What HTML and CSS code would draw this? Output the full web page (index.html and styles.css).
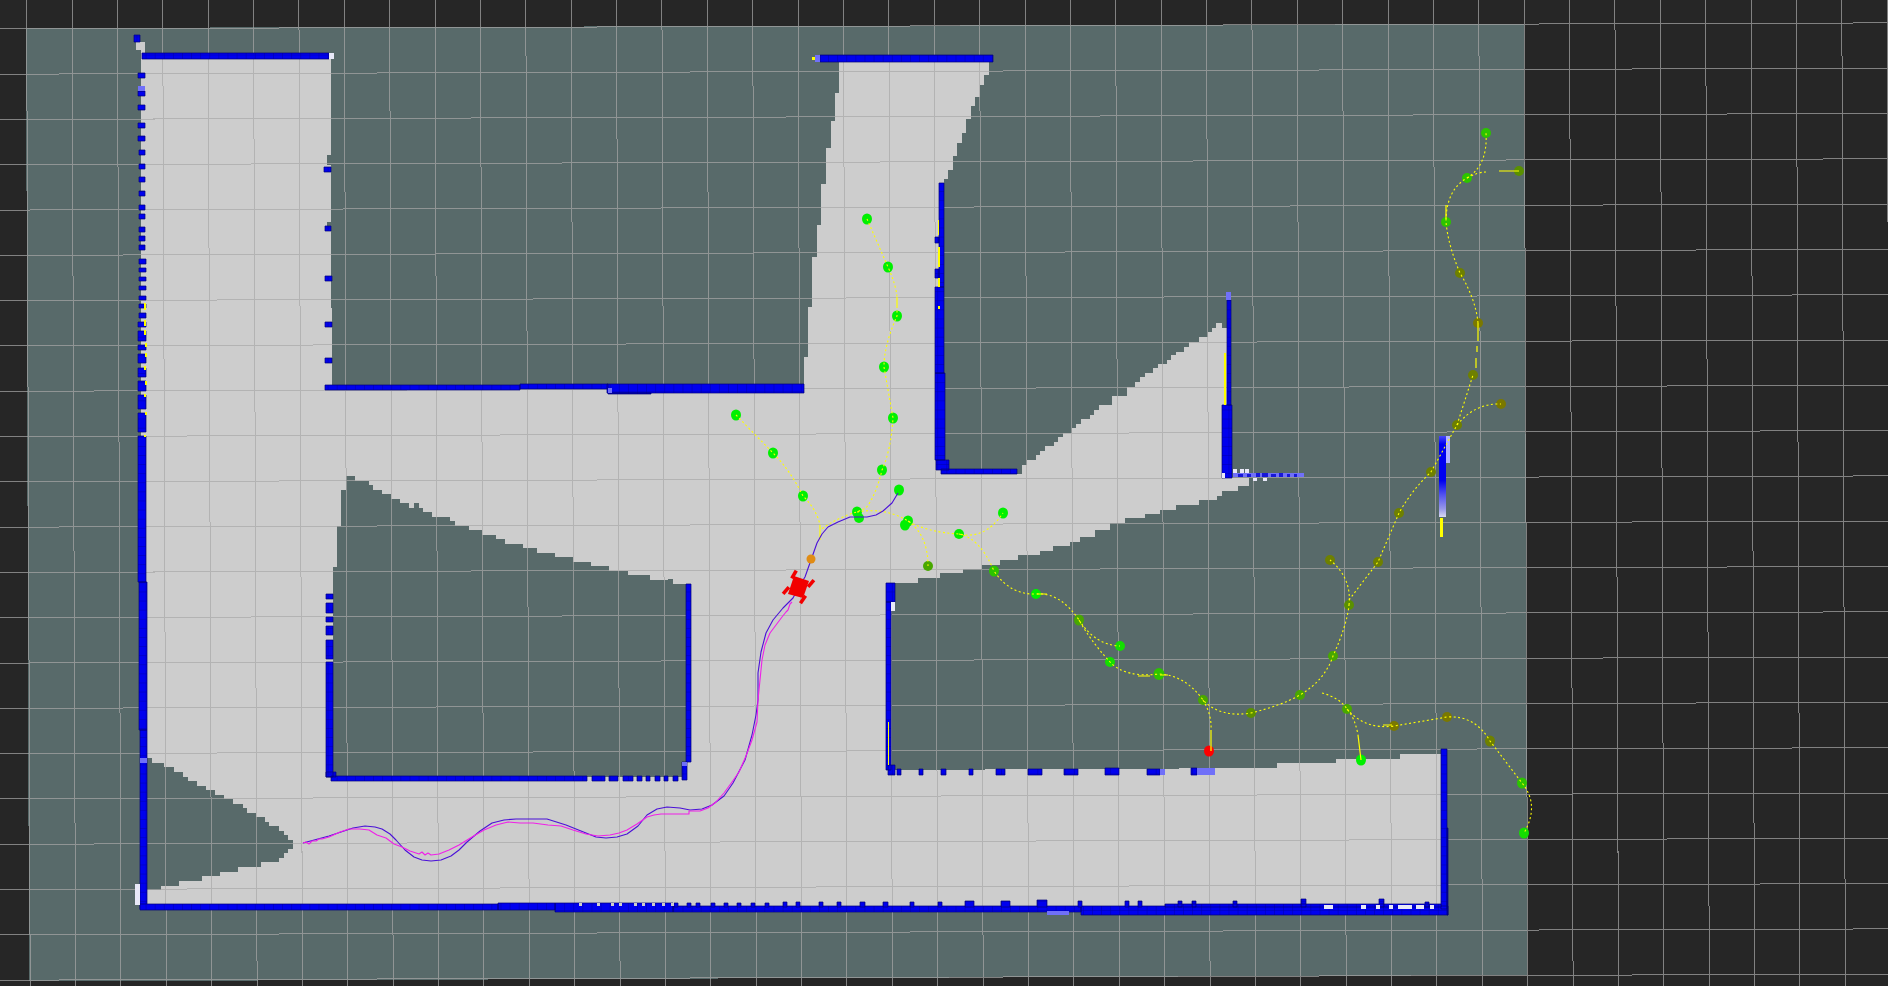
FILE: index.html
```html
<!DOCTYPE html>
<html lang="en">
<head>
<meta charset="utf-8">
<title>Map view</title>
<link rel="stylesheet" href="styles.css">
</head>
<body>
<main class="viewport">
<svg class="scene" width="1888" height="986" viewBox="0 0 1888 986" xmlns="http://www.w3.org/2000/svg">
  <defs>
    <pattern id="cells" width="9.1" height="9.1" patternUnits="userSpaceOnUse">
      <rect width="9.1" height="9.1" fill="#0000ee"/>
      <path d="M0 0H9.1M0 0V9.1" stroke="#0000a8" stroke-width="1"/>
    </pattern>
    <linearGradient id="fade" x1="0" y1="0" x2="0" y2="1">
      <stop offset="0" stop-color="#4848f8"/>
      <stop offset=".1" stop-color="#0000f0"/>
      <stop offset=".55" stop-color="#0000f0"/>
      <stop offset=".72" stop-color="#5050f0"/>
      <stop offset=".9" stop-color="#9898e8"/>
      <stop offset="1" stop-color="#d8d8f0"/>
    </linearGradient>
  </defs>

  <polygon class="map" points="26,28 1524,24 1527.5,975 29,981.5"/>

  <polygon class="free" points="136,42 145,42 145,55 331,55 331,155 327,155 327,165 331,165 331,222 327,222 327,228 331,228 332,385 804,385 804,357 808,357 808,307 812,307 812,257 817,257 817,225 821,225 821,184 826,184 826,148 831,148 831,121 835,121 835,93 839,93 839,61 989,61 989,75 984,75 984,85 980,85 980,97 975,97 975,106 971,106 971,119 966,119 966,133 962,133 962,143 957,143 957,156 953,156 953,170 948,170 948,179 944,179 944,474 1177,474 1176,510 1160,510 1160,514 1145,514 1145,518 1125,518 1125,523 1110,523 1110,530 1095,530 1095,537 1080,537 1080,542 1070,542 1070,546 1053,546 1053,551 1040,551 1040,555 1018,555 1018,560 1000,560 1000,565 982,565 982,569 963,569 963,573 940,573 940,578 918,578 918,583 889,583 889,770 1277,768 1277,763 1336,763 1336,759 1400,759 1400,754 1441,754 1441,906 141,906 141,50 136,50"/>

  <polygon class="free" transform="translate(700 30) scale(.40816 .33333)" points="788,1335 788,1305 800,1305 800,1290 822,1290 822,1275 833,1275 833,1262 845,1262 845,1248 867,1248 867,1235 878,1235 878,1222 889,1222 889,1208 911,1208 911,1195 922,1195 922,1182 933,1182 933,1168 955,1168 955,1155 966,1155 966,1140 977,1140 977,1125 1010,1125 1010,1098 1033,1098 1045,1098 1045,1070 1065,1070 1065,1055 1078,1055 1078,1042 1090,1042 1090,1030 1110,1030 1110,1015 1122,1015 1122,1002 1145,1002 1145,990 1155,990 1155,975 1167,975 1167,965 1187,965 1187,950 1198,950 1198,935 1222,935 1222,922 1245,922 1245,905 1255,905 1255,893 1265,893 1265,880 1278,880 1278,893 1290,893 1290,1345 1345,1345 1345,1368 1318,1368 1318,1383 1280,1383 1280,1397 1267,1397 1267,1410 1222,1410 1222,1425 1165,1425 1165,1440 1160,1440 1160,1335"/>

  <polygon class="map" transform="translate(320 460) scale(.33333)" points="38,950 38,322 52,322 52,198 63,198 63,90 77,90 77,48 105,48 105,62 147,62 147,76 160,76 160,90 187,90 187,103 214,103 214,117 241,117 241,130 268,130 268,144 282,144 282,130 296,130 296,144 309,144 309,157 336,157 336,171 390,171 390,184 404,184 404,198 447,198 447,211 487,211 487,225 528,225 528,238 555,238 555,252 610,252 610,265 651,265 651,279 705,279 705,292 760,292 760,306 813,306 813,319 867,319 867,332 924,332 924,346 990,346 990,359 1045,359 1045,356 1059,356 1059,372 1100,372 1100,950"/>

  <polygon class="map" transform="translate(100 730) scale(.40816 .33333)" points="115,85 128,85 128,98 158,98 158,112 182,112 182,125 204,125 204,140 216,140 216,153 238,153 238,167 260,167 260,180 282,180 282,194 304,194 304,208 327,208 327,222 350,222 350,235 361,235 361,248 382,248 382,262 404,262 404,275 415,275 415,288 438,288 438,302 450,302 450,315 461,315 461,330 472,330 472,357 461,357 461,370 450,370 450,383 438,383 438,395 394,395 394,410 338,410 338,425 294,425 294,438 250,438 250,452 193,452 193,467 150,467 150,480 115,480"/>

  <path class="grid" d="M26.6 0l3.6 986M72 0l3.6 986M117.4 0l3.6 986M162.7 0l3.6 986M208.1 0l3.6 986M253.5 0l3.6 986M298.9 0l3.6 986M344.3 0l3.6 986M389.6 0l3.6 986M435 0l3.6 986M480.4 0l3.6 986M525.8 0l3.6 986M571.2 0l3.6 986M616.5 0l3.6 986M661.9 0l3.6 986M707.3 0l3.6 986M752.7 0l3.6 986M798.1 0l3.6 986M843.4 0l3.6 986M888.8 0l3.6 986M934.2 0l3.6 986M979.6 0l3.6 986M1025 0l3.6 986M1070.3 0l3.6 986M1115.7 0l3.6 986M1161.1 0l3.6 986M1206.5 0l3.6 986M1251.9 0l3.6 986M1297.2 0l3.6 986M1342.6 0l3.6 986M1388 0l3.6 986M1433.4 0l3.6 986M1478.8 0l3.6 986M1524.1 0l3.6 986M1569.5 0l3.6 986M1614.9 0l3.6 986M1660.3 0l3.6 986M1705.7 0l3.6 986M1751 0l3.6 986M1796.4 0l3.6 986M1841.8 0l3.6 986M1887.2 0l3.6 986M0 28.9l1888 -6M0 74.2l1888 -6M0 119.5l1888 -6M0 164.8l1888 -6M0 210.1l1888 -6M0 255.4l1888 -6M0 300.7l1888 -6M0 346l1888 -6M0 391.3l1888 -6M0 436.6l1888 -6M0 481.9l1888 -6M0 527.2l1888 -6M0 572.5l1888 -6M0 617.8l1888 -6M0 663.1l1888 -6M0 708.4l1888 -6M0 753.7l1888 -6M0 799l1888 -6M0 844.3l1888 -6M0 889.6l1888 -6M0 934.9l1888 -6M0 980.2l1888 -6"/>

  <g fill="url(#cells)" class="walls">
    <path d="M134 35h6v7h-6zM142 53h187v6h-187z"/>
    <path d="M138 73h7v5h-7zM138 91h7v5h-7zM138 105h7v5h-7zM138 123h7v5h-7zM138 136h7v5h-7zM139 150h6v5h-6zM139 164h6v5h-6zM139 177h6v5h-6zM139 191h6v5h-6zM139 205h6v5h-6zM139 214h6v5h-6zM139 227h6v5h-6zM139 236h6v5h-6zM139 245h6v5h-6zM139 259h7v5h-7zM139 268h7v4h-7zM139 277h7v4h-7zM139 286h7v4h-7zM139 296h7v4h-7zM139 304h7v4h-7zM139 313h7v5h-7zM138 322h8v5h-8zM138 331h8v10h-8zM138 345h8v5h-8zM138 354h8v9h-8zM138 368h8v9h-8zM138 381h8v10h-8zM138 395h8v14h-8zM138 413h8v19h-8z"/>
    <path d="M138 436h8v146h-8zM139 582h8v148h-8zM140 730h7v179h-7z"/>
    <path d="M324 167h7v5h-7zM325 226h6v5h-6zM325 276h7v5h-7zM325 322h7v5h-7zM325 358h7v5h-7z"/>
    <path d="M325 385h195v5h-195zM520 384h88v5h-88zM607 384h197v9h-197zM608 393h43v1h-43z"/>
    <path d="M326 594h7v5h-7zM326 603h7v10h-7zM326 617h7v5h-7zM326 626h7v9h-7zM326 640h7v19h-7zM326 662h7v115h-7zM326 772h10v5h-10zM331 776h256v5h-256zM592 776h13v5h-13zM609 776h9v5h-9zM623 776h10v5h-10zM637 776h5v5h-5zM646 776h4v5h-4zM655 776h5v5h-5zM664 776h4v5h-4zM673 776h5v5h-5zM682 762h5v18h-5zM686 584h5v178h-5z"/>
    <path d="M140 904h358v6h-358zM498 903h57v7h-57zM555 903h118v9h-118zM673 906h408v6h-408zM1081 906h367v9h-367zM1441 749h6v160h-6zM1447 828h1v87h-1z"/>
    <path d="M674 903h4v4h-4zM687 903h4v4h-4zM696 903h4v4h-4zM711 903h4v4h-4zM724 903h4v4h-4zM737 903h4v4h-4zM751 903h4v4h-4zM765 903h4v4h-4zM783 902h4v5h-4zM796 902h4v5h-4zM819 902h4v5h-4zM837 902h4v5h-4zM860 902h5v5h-5zM883 902h5v5h-5zM910 902h4v5h-4zM938 902h4v5h-4zM965 901h9v6h-9zM1001 901h9v6h-9zM1037 900h10v7h-10zM1078 901h4v6h-4zM1125 901h4v6h-4zM1138 901h4v6h-4zM1178 901h4v6h-4zM1192 901h4v6h-4zM1233 901h4v6h-4zM1301 899h5v8h-5zM1379 899h5v8h-5zM1425 902h4v5h-4zM1165 904h276v3h-276z"/>
    <path d="M820 55h173v7h-173z"/>
    <path d="M939 183h5v104h-5zM935 237h4v6h-4zM935 269h4v9h-4zM935 287h9v86h-9zM935 373h10v87h-10zM936 460h13v10h-13zM941 469h76v5h-76z"/>
    <path d="M1227 300h4v105h-4zM1222 405h10v73h-10z"/>
    <path d="M886 583h9v19h-9zM886 602h5v168h-5zM888 765h7v10h-7z"/>
    <path d="M897 769h4v6h-4zM919 769h4v6h-4zM941 769h5v6h-5zM969 769h4v6h-4zM996 769h9v6h-9zM1028 769h14v6h-14zM1064 769h14v6h-14zM1105 768h14v7h-14zM1147 769h13v6h-13zM1191 768h6v7h-6z"/>
  </g>
  <path class="notch" d="M579 903h3v3h-3zM597 903h3v3h-3zM611 903h3v3h-3zM619 903h3v3h-3zM634 903h3v3h-3zM642 903h3v3h-3zM652 903h3v3h-3zM662 903h3v3h-3zM671 903h3v3h-3z"/>
  <path class="lav" d="M138 86h7v5h-7zM608 388h4v5h-4zM815 55h5v7h-5zM1226 292h5v8h-5zM1233 473h71v4h-71zM682 762h5v4h-5zM140 758h7v5h-7zM1160 769h5v6h-5zM1197 768h18v7h-18zM1047 911h22v4h-22z"/>
  <path class="deep" d="M1238 474h5v3h-5zM1247 474h4v3h-4zM1256 473h4v4h-4zM1262 473h6v4h-6zM1271 474h5v3h-5zM1279 473h4v4h-4zM1287 474h3v3h-3zM1294 474h3v3h-3z"/>
  <path class="pale" d="M329 53h5v6h-5zM135 884h5v21h-5zM891 602h4v9h-4zM1233 469h4v4h-4zM1240 469h4v4h-4zM1245 469h4v4h-4zM1253 478h4v3h-4zM1263 478h4v3h-4zM1222 473h3v5h-3zM1324 905h9v4h-9zM1361 905h5v4h-5zM1376 905h4v4h-4zM1389 905h4v4h-4zM1398 905h14v4h-14zM1416 905h8v4h-8zM1430 905h4v4h-4z"/>
  <path class="yellow" d="M144 303h2v7h-2zM144 320h2v6h-2zM144 330h2v5h-2zM145 343h2v4h-2zM145 353h2v4h-2zM144 366h2v4h-2zM145 381h2v4h-2zM144 394h2v3h-2zM145 412h2v3h-2zM144 435h2v2h-2zM812 57h3v3h-3zM938 220h1v15h-1zM938 247h2v20h-2zM938 278h2v9h-2zM938 306h2v3h-2zM1224 353h2v52h-2zM888 722h1v43h-1zM1440 518h3v19h-3z"/>
  <rect class="stack-top" x="1446" y="436" width="4" height="27"/>
  <rect x="1439" y="436" width="7" height="81" fill="url(#fade)"/>

  <g class="nodes">
    <ellipse class="n0" cx="736" cy="415" rx="5" ry="5.5"/>
    <ellipse class="n0" cx="773" cy="453" rx="5" ry="5.5"/>
    <ellipse class="n0" cx="803" cy="496" rx="5" ry="5.5"/>
    <ellipse class="n0" cx="867" cy="219" rx="5" ry="5.5"/>
    <ellipse class="n0" cx="888" cy="267" rx="5" ry="5.5"/>
    <ellipse class="n0" cx="897" cy="316" rx="5" ry="5.5"/>
    <ellipse class="n0" cx="884" cy="367" rx="5" ry="5.5"/>
    <ellipse class="n0" cx="893" cy="418" rx="5" ry="5.5"/>
    <ellipse class="n0" cx="882" cy="470" rx="5" ry="5.5"/>
    <ellipse class="n0" cx="899" cy="490" rx="5" ry="5.5"/>
    <ellipse class="n0" cx="859" cy="518" rx="5" ry="5"/>
    <ellipse class="n0" cx="857" cy="512" rx="5" ry="5.5"/>
    <ellipse class="n0" cx="908" cy="521" rx="5" ry="5.5"/>
    <ellipse class="n0" cx="905" cy="525" rx="5" ry="5.5"/>
    <ellipse class="n0" cx="959" cy="534" rx="5" ry="5"/>
    <ellipse class="n0" cx="1003" cy="513" rx="5" ry="5.5"/>
    <ellipse class="n3" cx="928" cy="566" rx="5" ry="5"/>
    <ellipse class="n2" cx="994" cy="571" rx="5" ry="5.5"/>
    <ellipse class="n0" cx="1036" cy="594" rx="5" ry="5"/>
    <ellipse class="n3" cx="1079" cy="620" rx="5" ry="5.5"/>
    <ellipse class="n1" cx="1120" cy="646" rx="5" ry="5"/>
    <ellipse class="n1" cx="1110" cy="662" rx="5" ry="5"/>
    <ellipse class="n2" cx="1159" cy="674" rx="5.5" ry="6"/>
    <ellipse class="n3" cx="1203" cy="700" rx="5" ry="5"/>
    <ellipse class="n4" cx="1251" cy="713" rx="5" ry="5"/>
    <ellipse class="n3" cx="1300" cy="695" rx="5" ry="5"/>
    <ellipse class="n3" cx="1333" cy="656" rx="5" ry="5"/>
    <ellipse class="n4" cx="1349" cy="605" rx="5" ry="5"/>
    <ellipse class="n5" cx="1378" cy="562" rx="5" ry="5"/>
    <ellipse class="n5" cx="1330" cy="560" rx="5" ry="5"/>
    <ellipse class="n3" cx="1347" cy="709" rx="5" ry="5"/>
    <ellipse class="n0" cx="1361" cy="760" rx="5" ry="5.5"/>
    <ellipse class="n6" cx="1394" cy="726" rx="5" ry="5"/>
    <ellipse class="n6" cx="1447" cy="717" rx="5" ry="5"/>
    <ellipse class="n5" cx="1490" cy="741" rx="5" ry="5.5"/>
    <ellipse class="n2" cx="1522" cy="783" rx="5" ry="5.5"/>
    <ellipse class="n1" cx="1524" cy="833" rx="5" ry="5.5"/>
    <ellipse class="n2" cx="1486" cy="133" rx="5" ry="5"/>
    <ellipse class="n4" cx="1519" cy="171" rx="5" ry="5"/>
    <ellipse class="n2" cx="1467" cy="178" rx="5" ry="5"/>
    <ellipse class="n2" cx="1446" cy="222" rx="5" ry="5"/>
    <ellipse class="n5" cx="1460" cy="273" rx="5" ry="5"/>
    <ellipse class="n6" cx="1478" cy="323" rx="5" ry="5"/>
    <ellipse class="n5" cx="1473" cy="375" rx="5" ry="5"/>
    <ellipse class="n6" cx="1501" cy="404" rx="5" ry="5"/>
    <ellipse class="n5" cx="1457" cy="425" rx="5" ry="5"/>
    <ellipse class="n5" cx="1431" cy="472" rx="5" ry="5"/>
    <ellipse class="n5" cx="1399" cy="513" rx="5" ry="5"/>
    <ellipse class="goal" cx="1209" cy="751" rx="5" ry="5.5"/>
  </g>

  <g class="traj">
    <path d="M736 415L773 453Q790 470 803 496Q817 510 820 525"/>
    <path d="M867 219L888 267Q896 285 897 297M897 306V316Q884 345 884 367L893 418Q891 450 882 470Q876 495 866 508L857 512Q838 517 820 530"/>
    <path d="M857 512Q885 507 908 521Q926 532 959 534Q985 540 1003 513"/>
    <path d="M908 521Q928 535 928 566"/>
    <path d="M959 534Q980 538 994 571Q1010 595 1036 594Q1060 592 1079 620Q1090 640 1110 662Q1125 678 1159 674Q1185 675 1203 700Q1220 718 1251 713Q1280 706 1300 695Q1325 680 1333 656Q1347 625 1349 605"/>
    <path d="M1079 620Q1095 645 1120 646"/>
    <path d="M1349 605Q1352 578 1330 560"/>
    <path d="M1349 600L1378 562L1399 513Q1412 490 1431 472L1457 425L1473 375"/>
    <path d="M1478 323Q1476 300 1460 273Q1448 245 1446 222Q1446 190 1467 178Q1488 165 1486 133"/>
    <path d="M1467 178Q1478 172 1486 172"/>
    <path d="M1457 425Q1475 403 1501 404"/>
    <path d="M1203 700Q1212 715 1211 730"/>
    <path d="M1322 693Q1340 698 1347 709Q1355 718 1358 735"/>
    <path d="M1347 709Q1365 730 1394 726L1447 717Q1475 715 1490 741L1522 783Q1540 805 1524 833"/>
  </g>
  <g class="ticks">
    <path d="M1478 323V341M1477 346V352M1476 358V368M820 525V540M1499 171H1519M1037 594H1047M1138 676H1150M1160 675H1168M1211 730V751M1358 735L1361 760M897 297V306M1446 205V219M1392 725H1383"/>
  </g>

  <polyline class="planned" points="303,843 329,836 353,828 365,826 375,827 382,829 390,834 396,840 405,850 414,857 422,860 431,861 441,860 451,856 459,850 467,842 480,831 492,823 504,820 516,819 547,819 566,825 586,833 596,837 606,838 617,837 627,834 638,826 647,815 657,809 667,807 680,808 690,810 702,809 712,805 724,796 733,783 745,760 752,735 756,715 758,700 758,673 761,652 766,633 773,620 783,608 793,598 800,585 805,577 817,543 822,534 828,527 838,522 850,517 867,517 876,515 883,511 892,503 898,493"/>
  <polyline class="actual" points="303,843 306,842 309,844 312,841 316,841 319,839 322,839 329,837 340,832 349,829 360,829 369,830 377,835 386,838 394,844 402,847 410,851 416,853 419,854 422,852 425,855 428,853 431,855 439,854 449,850 459,845 472,837 484,830 496,825 508,822 520,823 533,823 548,825 561,826 573,830 586,834 598,836 610,835 619,833 627,830 637,824 647,817 654,815 661,814 675,814 689,814 689,811 700,811 708,808 716,802 724,793 732,782 739,772 746,756 752,740 757,722 758,700 760,680 762,660 765,645 770,633 776,625 782,617 786,612 788,610 790,604 792,602"/>

  <circle class="carrot" cx="811" cy="559" r="4.5"/>
  <g class="robot">
    <polygon points="794,576 809,581 803,598 788,594"/>
    <rect x="792.2" y="570" width="3.6" height="9" transform="rotate(30 794 574.5)"/>
    <rect x="809.2" y="579" width="3.6" height="9" transform="rotate(40 811 583.5)"/>
    <rect x="801.2" y="595" width="3.6" height="9" transform="rotate(35 803 599.5)"/>
    <rect x="784.2" y="586" width="3.6" height="9" transform="rotate(40 786 590.5)"/>
  </g>
</svg>
</main>
</body>
</html>
```

FILE: styles.css
```css
html, body {
  margin: 0;
  padding: 0;
  background: #262626;
  overflow: hidden;
}

.viewport {
  width: 1888px;
  height: 986px;
  font-family: "Liberation Sans", sans-serif;
}

.scene {
  display: block;
}

.map {
  fill: #586a6a;
  shape-rendering: crispEdges;
}

.free,
.notch {
  fill: #cdcdcd;
  shape-rendering: crispEdges;
}

.grid {
  fill: none;
  stroke: #a8a8a8;
  stroke-opacity: 0.7;
  stroke-width: 1;
  shape-rendering: crispEdges;
}

.walls path {
  stroke: #00007a;
  stroke-width: 0.7;
}

.lav,
.deep,
.pale,
.yellow {
  shape-rendering: crispEdges;
}

.lav {
  fill: #7070f8;
}

.deep {
  fill: #1818d8;
}

.stack-top {
  fill: #b4b4ff;
}

.pale {
  fill: #e8e8f8;
}

.yellow {
  fill: #ffff00;
}

.nodes .n0 { fill: #00f000; }
.nodes .n1 { fill: #14de00; }
.nodes .n2 { fill: #2cc400; }
.nodes .n3 { fill: #48a800; }
.nodes .n4 { fill: #5a9000; }
.nodes .n5 { fill: #6e8000; }
.nodes .n6 { fill: #7a7800; }
.nodes .goal { fill: #ff0000; }

.traj path {
  fill: none;
  stroke: #ffff00;
  stroke-width: 1.1;
  stroke-dasharray: 2 2.5;
}

.ticks path {
  fill: none;
  stroke: #ffff00;
  stroke-width: 1.2;
}

.planned,
.actual {
  fill: none;
  stroke-width: 1.1;
  stroke-linejoin: round;
}

.planned {
  stroke: #4a10d8;
}

.actual {
  stroke: #f020e8;
}

.carrot {
  fill: #e08c14;
}

.robot {
  fill: #f20000;
}
```
